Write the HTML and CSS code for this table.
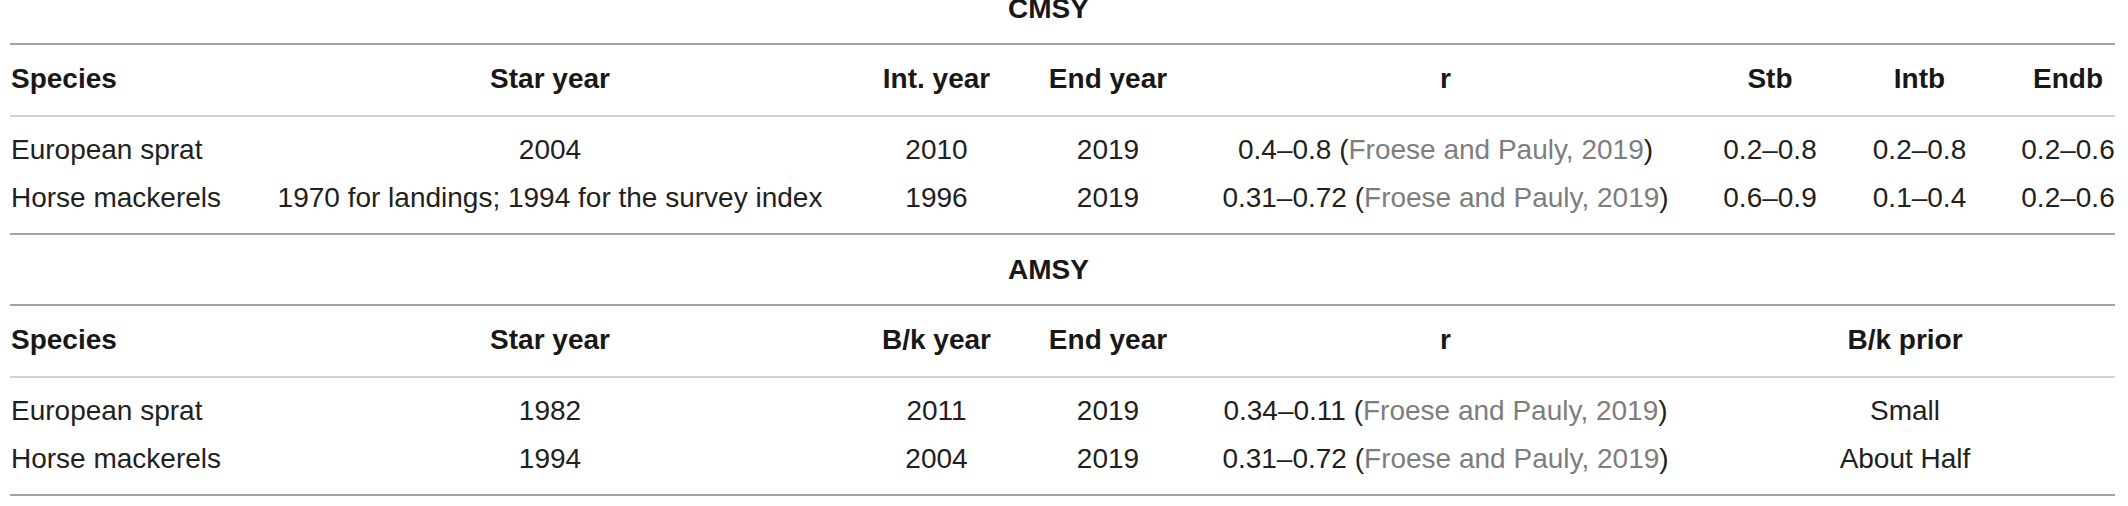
FILE: index.html
```html
<!DOCTYPE html>
<html lang="en">
<head>
<meta charset="utf-8">
<title>CMSY and AMSY priors</title>
<link rel="stylesheet" href="styles.css">
</head>
<body>
<div class="page">
  <div class="title">CMSY</div>
  <table class="data">
    <colgroup>
      <col class="c-species"><col class="c-star"><col class="c-int"><col class="c-end"><col class="c-r"><col class="c-stb"><col class="c-intb"><col class="c-endb">
    </colgroup>
    <thead>
      <tr>
        <th class="left">Species</th>
        <th>Star year</th>
        <th>Int. year</th>
        <th>End year</th>
        <th>r</th>
        <th>Stb</th>
        <th>Intb</th>
        <th class="last">Endb</th>
      </tr>
    </thead>
    <tbody>
      <tr class="first">
        <td class="left">European sprat</td>
        <td>2004</td>
        <td>2010</td>
        <td>2019</td>
        <td>0.4–0.8 (<span class="cite">Froese and Pauly, 2019</span>)</td>
        <td>0.2–0.8</td>
        <td>0.2–0.8</td>
        <td class="last">0.2–0.6</td>
      </tr>
      <tr class="final">
        <td class="left">Horse mackerels</td>
        <td>1970 for landings; 1994 for the survey index</td>
        <td>1996</td>
        <td>2019</td>
        <td>0.31–0.72 (<span class="cite">Froese and Pauly, 2019</span>)</td>
        <td>0.6–0.9</td>
        <td>0.1–0.4</td>
        <td class="last">0.2–0.6</td>
      </tr>
    </tbody>
  </table>

  <div class="title">AMSY</div>
  <table class="data">
    <colgroup>
      <col class="c-species"><col class="c-star"><col class="c-int"><col class="c-end"><col class="c-r"><col class="c-stb"><col class="c-intb"><col class="c-endb">
    </colgroup>
    <thead>
      <tr>
        <th class="left">Species</th>
        <th>Star year</th>
        <th>B/k year</th>
        <th>End year</th>
        <th>r</th>
        <th colspan="3">B/k prior</th>
      </tr>
    </thead>
    <tbody>
      <tr class="first">
        <td class="left">European sprat</td>
        <td>1982</td>
        <td>2011</td>
        <td>2019</td>
        <td>0.34–0.11 (<span class="cite">Froese and Pauly, 2019</span>)</td>
        <td colspan="3">Small</td>
      </tr>
      <tr class="final">
        <td class="left">Horse mackerels</td>
        <td>1994</td>
        <td>2004</td>
        <td>2019</td>
        <td>0.31–0.72 (<span class="cite">Froese and Pauly, 2019</span>)</td>
        <td colspan="3">About Half</td>
      </tr>
    </tbody>
  </table>
</div>
</body>
</html>
```

FILE: styles.css
```css
html, body {
  margin: 0;
  padding: 0;
  background: #ffffff;
}

body {
  font-family: "Liberation Sans", Arial, Helvetica, sans-serif;
  font-size: 28px;
  color: #231f20;
  overflow: hidden;
}

.page {
  margin: -26px 13px 0 10px;
}

.title {
  height: 69px;
  line-height: 69px;
  text-align: center;
  font-weight: bold;
  padding-right: 28px;
  color: #1a1718;
}

.data {
  width: 100%;
  table-layout: fixed;
  border-collapse: separate;
  border-spacing: 0;
}

.c-species { width: 237px; }
.c-star { width: 606px; }
.c-int { width: 167px; }
.c-end { width: 176px; }
.c-r { width: 499px; }
.c-stb { width: 150px; }
.c-intb { width: 149px; }
.c-endb { width: 121px; }

.data th {
  font-weight: bold;
  color: #1a1718;
  line-height: 67px;
  padding: 0 0 3px;
  text-align: center;
  white-space: nowrap;
  border-top: 2px solid #a4a4a4;
  border-bottom: 2px solid #d2d2d2;
}

.data td {
  line-height: 48px;
  padding: 0;
  text-align: center;
  white-space: nowrap;
}

.data .left {
  text-align: left;
  padding-left: 1px;
}

.data .last {
  padding-left: 27px;
}

.data tr.first td {
  padding-top: 9px;
}

.data tr.final td {
  padding-bottom: 11px;
  border-bottom: 2px solid #a4a4a4;
}

.cite {
  color: #7d7d7d;
}
```
